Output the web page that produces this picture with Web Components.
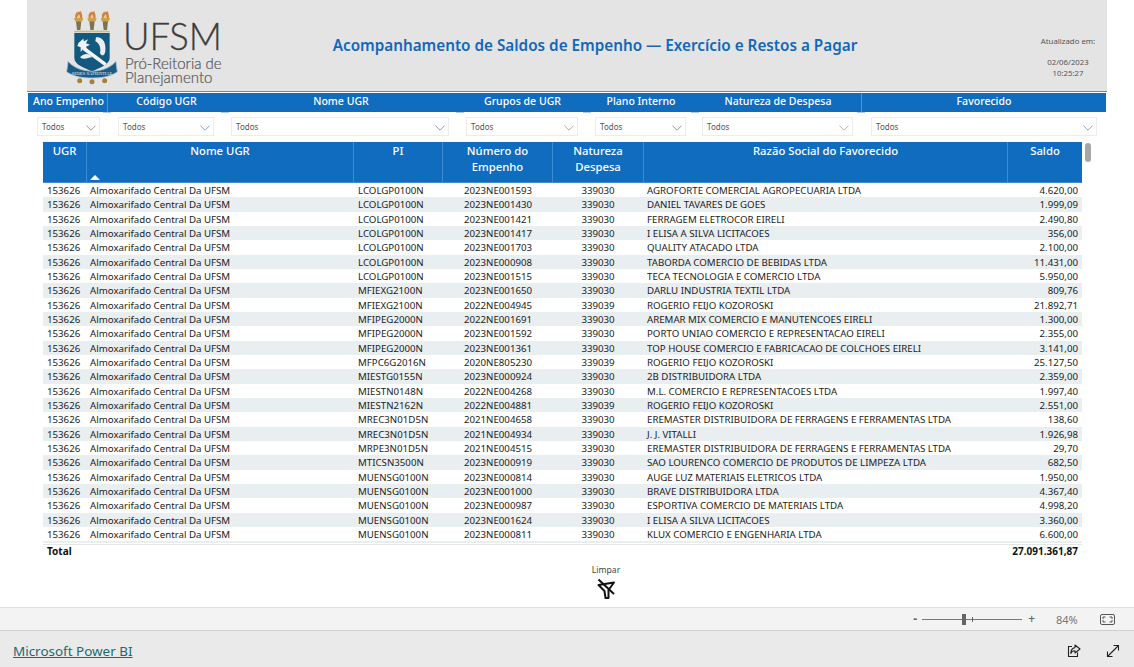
<!DOCTYPE html>
<html lang="pt-BR">
<head>
<meta charset="utf-8">
<title>Acompanhamento de Saldos de Empenho</title>
<style>
    html, body { margin:0; padding:0; height:100%; background:#fff; overflow:hidden; }
    body { font-family:'Noto Sans','Open Sans',sans-serif; display:flex; flex-direction:column; height:667px; }
    ufsm-canvas { flex:1; min-height:0; }
</style>
</head>
<body>
<ufsm-canvas>
    <ufsm-header></ufsm-header>
    <ufsm-slicers></ufsm-slicers>
    <ufsm-table></ufsm-table>
    <ufsm-clear></ufsm-clear>
</ufsm-canvas>
<ufsm-zoombar></ufsm-zoombar>
<ufsm-footer></ufsm-footer>

<script>
const FONT = "'Noto Sans','Open Sans',sans-serif";

class UfsmCanvas extends HTMLElement {
    constructor() {
        super();
        this.attachShadow({ mode: 'open' });
        this.shadowRoot.innerHTML = `
            <style>
                :host { display:block; padding:0 27px 0 27px; box-sizing:border-box; font-family:${FONT}; }
                .page { display:flex; flex-direction:column; width:1080px; }
            </style>
            <div class="page"><slot></slot></div>`;
    }
}

// ── Header ──────────────────────────────────────────────────────────────

class UfsmHeader extends HTMLElement {
    constructor() {
        super();
        this.attachShadow({ mode: 'open' });
        this.shadowRoot.innerHTML = `
            <style>
                :host { display:flex; height:92px; box-sizing:border-box; background:#e4e4e4;
                        border-bottom:1px solid #6f8796; align-items:stretch; }
                .logo { width:205px; padding:8px 0 0 37px; box-sizing:border-box; display:flex; gap:5px; }
                svg { display:block; flex:none; }
                .words { display:flex; flex-direction:column; font-family:'Lato',sans-serif; }
                .ufsm { font-size:36.5px; line-height:36px; margin:10px 0 0 -2px; color:#3d3d3d; font-weight:300;
                        -webkit-text-stroke:.3px #3d3d3d; }
                .sub { font-size:15px; line-height:14px; color:#555; margin-top:2px; white-space:nowrap;
                       font-weight:300; -webkit-text-stroke:.2px #555; }
                .title { flex:1; text-align:center; color:#1168bb; font-weight:600; font-size:15.27px;
                         padding:35px 68px 0 0; white-space:nowrap; }
                .stamp { width:84px; font-size:7.8px; color:#555; text-align:center; padding-top:36px; line-height:11px; margin-right:-3px; }
                .stamp div + div { margin-top:10px; }
            </style>
            <div class="logo">
                <!-- viewBox is 3x the drawn size, coordinates read off the crop -->
                <svg width="56" height="78" viewBox="0 0 168 234">
                    <defs>
                        <g id="t">
                            <path d="M-9 30 C-13 22 -8 18 -6 12 C-4 15 -3 16 -2 10 C1 14 4 12 7 9 C8 16 13 22 10 31Z" fill="#d07f3c"/>
                            <path d="M-5 30 C-6 24 -2 24 0 18 C3 23 6 25 4 30Z" fill="#eec58f"/>
                            <path d="M-14 30 H14 L11 40 H-11Z" fill="#c9a24a"/>
                            <path d="M-8 40 H8 L5 66 H-5Z" fill="#7d7350"/>
                        </g>
                    </defs>
                    <use href="#t" x="44"/>
                    <use href="#t" x="84"/>
                    <use href="#t" x="124"/>
                    <rect x="31" y="68" width="106" height="5" fill="#c7b98a"/>
                    <path d="M31 75 H137 V150 C137 172 105 178 84 192 C63 178 31 172 31 150Z" fill="#13587f"/>
                    <path d="M44 104 L58 92 L60 100 L72 94 L66 106 L78 110 L66 116 L72 128 L58 122 L50 132 L50 118 L40 114Z" fill="#eef2f4"/>
                    <path d="M62 116 L128 166 L122 174 L56 126Z" fill="#f2f4f5"/>
                    <path d="M96 88 C112 84 128 100 124 130 C122 144 114 146 108 136 C112 120 106 106 94 100Z" fill="#e8edf0"/>
                    <path d="M48 148 C62 134 76 136 84 148 C72 148 62 158 48 148Z" fill="#e8edf0"/>
                    <path d="M12 160 C34 184 60 188 84 190 C108 188 134 184 156 160 L160 192 C134 208 108 210 84 210 C60 210 34 208 8 192Z" fill="#1a5c85" stroke="#b5c4ce" stroke-width="2.5"/>
                    <text x="84" y="202" text-anchor="middle" font-family="Liberation Serif" font-size="15" fill="#e6edf1" textLength="122" lengthAdjust="spacingAndGlyphs">SEDES SAPIENTIAE</text>
                    <circle cx="47" cy="218" r="7.5" fill="#a5813f"/>
                    <circle cx="84" cy="221" r="7.5" fill="#a5813f"/>
                    <circle cx="122" cy="218" r="7.5" fill="#a5813f"/>
                </svg>
                <div class="words">
                    <div class="ufsm">UFSM</div>
                    <div class="sub">Pró-Reitoria de<br>Planejamento</div>
                </div>
            </div>
            <div class="title">Acompanhamento de Saldos de Empenho — Exercício e Restos a Pagar</div>
            <div class="stamp">
                <div>Atualizado em:</div>
                <div>02/06/2023<br>10:25:27</div>
            </div>`;
    }
}

// ── Slicers ─────────────────────────────────────────────────────────────

class UfsmDropdown extends HTMLElement {
    constructor() {
        super();
        this.attachShadow({ mode: 'open' });
        this.shadowRoot.innerHTML = `
            <style>
                :host { display:flex; align-items:center; justify-content:space-between; height:19px;
                        box-sizing:border-box; background:#fff; border:1px solid #ececec;
                        padding:0 3px 0 4px; font-size:8px; color:#555; }
                svg { display:block; margin-top:2px; }
            </style>
            <span><slot></slot></span>
            <svg width="10" height="6" viewBox="0 0 10 6"><path d="M.4 .6 L5 5.2 L9.6 .6" fill="none" stroke="var(--chev,#777)" stroke-width=".9"/></svg>`;
    }
}

class UfsmSlicers extends HTMLElement {
    connectedCallback() {
        if (this.shadowRoot) return;
        this.attachShadow({ mode: 'open' });
        // label, width, separator on the right, padding nudge
        const titles = [
            ['Ano Empenho', 80, 1, 'padding-left:2px'], ['Código UGR', 117], ['Nome UGR', 235, 0, 'padding-right:3px'],
            ['Grupos de UGR', 127, 0, 'padding-right:2px'], ['Plano Interno', 108], ['Natureza de Despesa', 167, 1], ['Favorecido', 244]
        ];
        const boxes = [
            [10, 63, '#8c8c96'], [18, 96, '#6f95c4'], [17, 218, '#6f95c4'], [17, 112, '#b99a82'],
            [17, 91, '#888'], [16, 151, '#c9a27e'], [18, 226, '#6fa3cf']
        ];
        this.shadowRoot.innerHTML = `
            <style>
                :host { display:block; }
                .titles { display:flex; height:19px; margin:1px 0 0 1px; background:#0f6cbf; width:1078px; }
                .titles div { position:relative; box-sizing:border-box; color:#fff; font-size:10.55px; font-weight:500; text-align:center;
                              line-height:17px; white-space:nowrap; }
                .titles div.sep { border-right:1px solid #4f93d2; }
                .titles div::after { content:''; position:absolute; right:-4px; bottom:-1px; width:8px; height:1px; background:#a9c8e4; }
                .titles div:last-child::after { display:none; }
                .boxes { display:flex; margin-top:5px; }
            </style>
            <div class="titles">${titles.map(t =>
                `<div class="${t[2] ? 'sep' : ''}" style="width:${t[1]}px;${t[3] || ''}">${t[0]}</div>`).join('')}</div>
            <div class="boxes">${boxes.map(b =>
                `<ufsm-dropdown style="margin-left:${b[0]}px;width:${b[1]}px;--chev:${b[2]}">Todos</ufsm-dropdown>`).join('')}</div>`;
    }
}

// ── Table ───────────────────────────────────────────────────────────────

const ROWS = [
    ['LCOLGP0100N','2023NE001593','339030','AGROFORTE COMERCIAL AGROPECUARIA LTDA','4.620,00'],
    ['LCOLGP0100N','2023NE001430','339030','DANIEL TAVARES DE GOES','1.999,09'],
    ['LCOLGP0100N','2023NE001421','339030','FERRAGEM ELETROCOR EIRELI','2.490,80'],
    ['LCOLGP0100N','2023NE001417','339030','I ELISA A SILVA LICITACOES','356,00'],
    ['LCOLGP0100N','2023NE001703','339030','QUALITY ATACADO LTDA','2.100,00'],
    ['LCOLGP0100N','2023NE000908','339030','TABORDA COMERCIO DE BEBIDAS LTDA','11.431,00'],
    ['LCOLGP0100N','2023NE001515','339030','TECA TECNOLOGIA E COMERCIO LTDA','5.950,00'],
    ['MFIEXG2100N','2023NE001650','339030','DARLU INDUSTRIA TEXTIL LTDA','809,76'],
    ['MFIEXG2100N','2022NE004945','339039','ROGERIO FEIJO KOZOROSKI','21.892,71'],
    ['MFIPEG2000N','2022NE001691','339030','AREMAR MIX COMERCIO E MANUTENCOES EIRELI','1.300,00'],
    ['MFIPEG2000N','2023NE001592','339030','PORTO UNIAO COMERCIO E REPRESENTACAO EIRELI','2.355,00'],
    ['MFIPEG2000N','2023NE001361','339030','TOP HOUSE COMERCIO E FABRICACAO DE COLCHOES EIRELI','3.141,00'],
    ['MFPC6G2016N','2020NE805230','339039','ROGERIO FEIJO KOZOROSKI','25.127,50'],
    ['MIESTG0155N','2023NE000924','339030','2B DISTRIBUIDORA LTDA','2.359,00'],
    ['MIESTN0148N','2022NE004268','339030','M.L. COMERCIO E REPRESENTACOES LTDA','1.997,40'],
    ['MIESTN2162N','2022NE004881','339039','ROGERIO FEIJO KOZOROSKI','2.551,00'],
    ['MREC3N01D5N','2021NE004658','339030','EREMASTER DISTRIBUIDORA DE FERRAGENS E FERRAMENTAS LTDA','138,60'],
    ['MREC3N01D5N','2021NE004934','339030','J. J. VITALLI','1.926,98'],
    ['MRPE3N01D5N','2021NE004515','339030','EREMASTER DISTRIBUIDORA DE FERRAGENS E FERRAMENTAS LTDA','29,70'],
    ['MTICSN3500N','2023NE000919','339030','SAO LOURENCO COMERCIO DE PRODUTOS DE LIMPEZA LTDA','682,50'],
    ['MUENSG0100N','2023NE000814','339030','AUGE LUZ MATERIAIS ELETRICOS LTDA','1.950,00'],
    ['MUENSG0100N','2023NE001000','339030','BRAVE DISTRIBUIDORA LTDA','4.367,40'],
    ['MUENSG0100N','2023NE000987','339030','ESPORTIVA COMERCIO DE MATERIAIS LTDA','4.998,20'],
    ['MUENSG0100N','2023NE001624','339030','I ELISA A SILVA LICITACOES','3.360,00'],
    ['MUENSG0100N','2023NE000811','339030','KLUX COMERCIO E ENGENHARIA LTDA','6.600,00']
];

class UfsmTable extends HTMLElement {
    constructor() {
        super();
        this.attachShadow({ mode: 'open' });
        const headCols = '44px 267px 89px 110px 91px 364px 74px';
        const cols = '43px 268px 89px 110px 90px 364px 75px';
        const body = ROWS.map((r, i) => `
            <div class="row ${i % 2 ? 'alt' : ''}">
                <div>153626</div><div>Almoxarifado Central Da UFSM</div><div class="pi">${r[0]}</div>
                <div class="c">${r[1]}</div><div class="c">${r[2]}</div><div>${r[3]}</div><div class="r">${r[4]}</div>
            </div>`).join('');
        this.shadowRoot.innerHTML = `
            <style>
                :host { display:block; position:relative; margin:6px 0 0 16px; width:1039px; font-size:9.7px; color:#222; }
                .head { display:grid; grid-template-columns:${headCols}; height:41px; box-sizing:border-box; background:#0f6cbf;
                        color:#fff; font-size:11.3px; font-weight:500; line-height:16px; border-bottom:1px solid #3f8ad0; }
                .head > div { position:relative; text-align:center; padding-top:1px; border-right:1px solid #3f8ad0; box-sizing:border-box; }
                .head > div:last-child { border-right:none; }
                .sort { position:absolute; left:3px; bottom:2px; width:0; height:0;
                        border-left:5px solid transparent; border-right:5px solid transparent; border-bottom:5px solid #fff; }
                .rows { display:grid; grid-auto-rows:14.33px; height:361px; overflow:hidden; }
                .row { display:grid; grid-template-columns:${cols}; line-height:15px; white-space:nowrap; }
                .row.alt { background:#e9eef1; }
                .row > div { padding:0 0 0 4px; overflow:hidden; box-sizing:border-box; }
                .row .c { text-align:center; padding:0; }
                .row .r { text-align:right; padding:0 4px 0 0; }
                .stub { background:#e9eef1; height:2px; }
                .total { display:flex; justify-content:space-between; font-weight:700; font-size:10px; color:#111;
                         border-top:1px solid #e6e6e6; height:14px; line-height:13px; padding:0 4px 0 4px; }
                .thumb { position:absolute; left:1042px; top:1px; width:6px; height:19px; border-radius:3px; background:#a6a6a6; }
            </style>
            <div class="head">
                <div>UGR</div>
                <div>Nome UGR<span class="sort"></span></div>
                <div>PI</div>
                <div>Número do<br>Empenho</div>
                <div>Natureza<br>Despesa</div>
                <div>Razão Social do Favorecido</div>
                <div>Saldo</div>
            </div>
            <div class="rows">${body}<div class="stub"></div></div>
            <div class="total"><span>Total</span><span>27.091.361,87</span></div>
            <div class="thumb"></div>`;
    }
}

class UfsmClear extends HTMLElement {
    constructor() {
        super();
        this.attachShadow({ mode: 'open' });
        this.shadowRoot.innerHTML = `
            <style>
                :host { display:flex; flex-direction:column; align-items:center; margin:5px 0 0 18px; width:1122px; font-size:8.6px; color:#444; }
                svg { display:block; margin-top:2px; }
            </style>
            <span>Limpar</span>
            <svg width="20" height="22" viewBox="0 0 20 22">
                <path d="M2.5 7 L18 4.5 L12.5 12 L12.5 20 L9.5 20 L8.5 13 Z" fill="#fff" stroke="#111" stroke-width="2" stroke-linejoin="round"/>
                <path d="M2.5 1.5 L18 16" stroke="#111" stroke-width="2"/>
            </svg>`;
    }
}

// ── Bottom bars ─────────────────────────────────────────────────────────

class UfsmZoombar extends HTMLElement {
    constructor() {
        super();
        this.attachShadow({ mode: 'open' });
        this.shadowRoot.innerHTML = `
            <style>
                :host { display:flex; align-items:center; justify-content:flex-end; height:24px; box-sizing:border-box; background:#f3f3f3;
                        border-top:1px solid #e0e0e0; border-bottom:1px solid #cfcfcf; font-family:${FONT}; color:#666; padding-right:19px; }
                .minus, .plus { font-size:12px; font-weight:700; line-height:12px; }
                .plus { font-weight:500; color:#666; margin-left:6px; }
                .minus { margin-right:5px; }
                .track { position:relative; width:100px; height:1px; background:#777; }
                .knob { position:absolute; left:40px; top:-5px; width:4px; height:11px; background:#666; }
                .tick { position:absolute; left:50px; top:-2px; width:1px; height:5px; background:#666; }
                .pct { font-size:11px; color:#777; margin-left:21px; width:26px; }
                svg { display:block; margin-left:18px; }
            </style>
            <span class="minus">-</span>
            <div class="track"><span class="knob"></span><span class="tick"></span></div>
            <span class="plus">+</span>
            <span class="pct">84%</span>
            <svg width="15" height="11" viewBox="0 0 15 11" fill="none" stroke="#555"><rect x=".5" y=".5" width="14" height="10" rx="1.5"/><path d="M3 5 V3 H5.5 M12 5 V3 H9.5 M3 6 V8 H5.5 M12 6 V8 H9.5"/></svg>`;
    }
}

class UfsmFooter extends HTMLElement {
    constructor() {
        super();
        this.attachShadow({ mode: 'open' });
        this.shadowRoot.innerHTML = `
            <style>
                :host { display:flex; align-items:center; height:36px; box-sizing:border-box; background:#eaeaea; padding:3px 14px 0 13px; font-family:${FONT}; }
                a { color:#1b6a72; font-size:13.45px; text-decoration:underline; flex:1; }
                .ico { display:flex; gap:25px; }
                svg { display:block; }
            </style>
            <a href="#">Microsoft Power BI</a>
            <div class="ico">
                <svg width="14" height="14" viewBox="0 0 14 14" fill="none" stroke="#222" stroke-width="1.1">
                    <path d="M5 2.5 H1.5 V12.5 H10.5 V8.5"/>
                    <path d="M8 1 L13 5 L8 9 V6.8 C6 6.8 4.5 7.6 3.8 9.5 C3.8 6.5 5.5 4 8 3.6 Z" stroke-linejoin="round"/>
                </svg>
                <svg width="14" height="14" viewBox="0 0 14 14" fill="none" stroke="#222" stroke-width="1.1">
                    <path d="M1.5 12.5 L12.5 1.5 M7.5 1.5 H12.5 V6.5 M1.5 7.5 V12.5 H6.5"/>
                </svg>
            </div>`;
    }
}

customElements.define('ufsm-canvas', UfsmCanvas);
customElements.define('ufsm-header', UfsmHeader);
customElements.define('ufsm-dropdown', UfsmDropdown);
customElements.define('ufsm-slicers', UfsmSlicers);
customElements.define('ufsm-table', UfsmTable);
customElements.define('ufsm-clear', UfsmClear);
customElements.define('ufsm-zoombar', UfsmZoombar);
customElements.define('ufsm-footer', UfsmFooter);
</script>
</body>
</html>
